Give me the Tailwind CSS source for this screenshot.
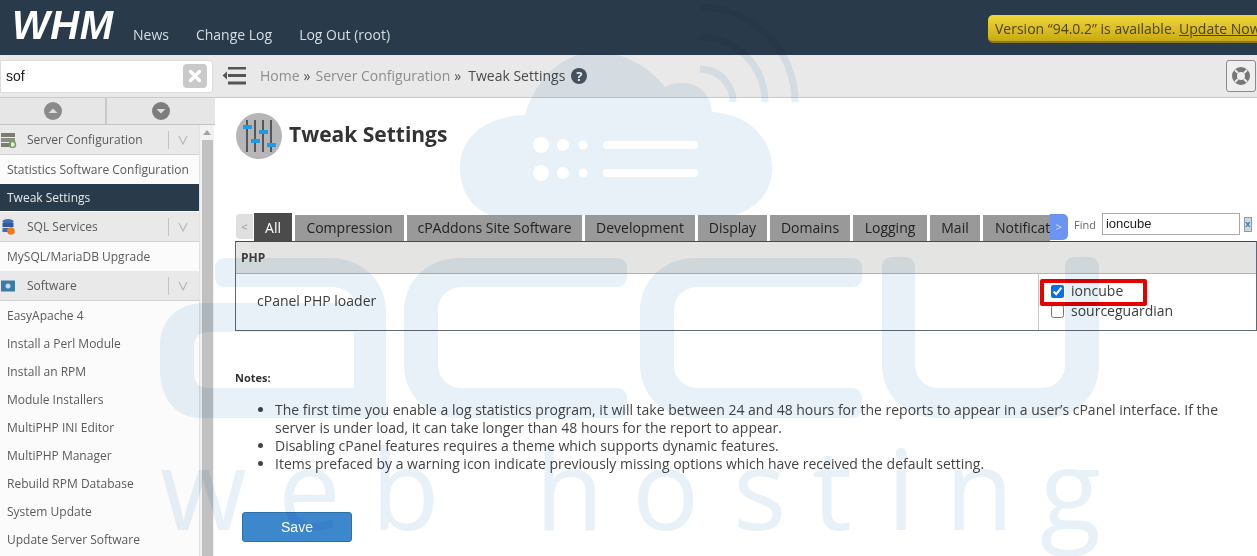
<!DOCTYPE html>
<html lang="en">
<head>
  <title>WHM Tweak Settings</title>
  <meta charset="utf-8" />
  <script src="https://cdn.jsdelivr.net/npm/@tailwindcss/browser@4"></script>
</head>
<body class="relative w-[1257px] h-[556px] overflow-hidden bg-white font-['Open_Sans',sans-serif] text-[14px] text-[#3d3d3d]">

<!-- top bar -->
<header class="h-[55px] bg-[#293a4b] flex items-start">
  <div class="w-[133px] pl-[12px] pt-[3px] text-white font-['Liberation_Sans',sans-serif] font-bold italic text-[40px] leading-[44px] tracking-[0.5px]">WHM</div>
  <nav class="flex gap-[27px] pt-[25px] text-[14px] leading-[19px] text-[#d5dde3]">
    <a>News</a>
    <a>Change Log</a>
    <a>Log Out (root)</a>
  </nav>
  <div class="ml-auto mt-[15px] w-[269px] h-[28px] rounded-l-[5px] pl-[7px] leading-[27px] whitespace-nowrap overflow-hidden text-[#4d4312] bg-gradient-to-b from-[#f0d838] to-[#c9a90f] border-b-2 border-[#8c7a18]">
    Version “94.0.2” is available. <span class="underline">Update Now</span>
  </div>
</header>

<!-- search + breadcrumb -->
<div class="h-[43px] flex items-center bg-[#e9e9e9] border-b border-[#c9c9c9]">
  <div class="w-[214px] h-[33px] relative">
    <div class="w-[213px] h-[33px] bg-white rounded-r-[3px] border border-[#dcdcdc] pl-[5px] font-['Liberation_Sans',sans-serif] text-[14px] leading-[31px] text-[#222]">sof</div>
    <div class="absolute left-[183px] top-[4px] w-[24px] h-[24px] rounded-[4px] bg-[#c9c9c9] flex items-center justify-center">
      <svg width="14" height="14" viewBox="0 0 14 14"><path d="M2.5 2.5L11.5 11.5M11.5 2.5L2.5 11.5" stroke="#fff" stroke-width="3.4" stroke-linecap="round"/></svg>
    </div>
  </div>
  <svg class="ml-[8px]" width="25" height="18" viewBox="0 0 25 18">
    <path d="M6 1H24M6 8.5H24M6 16H24" stroke="#555" stroke-width="3"/>
    <path d="M0.500 8.500L5 4.500V12.500Z" fill="#555"/>
  </svg>
  <div class="ml-[13px] flex items-center text-[14px] whitespace-nowrap">
    <span class="text-[#8d8d8d] mt-[-2px]">Home</span><span class="ml-[4px] text-[#555] mt-[-2px]">»</span>
    <span class="ml-[5px] text-[#8d8d8d] mt-[-2px]">Server Configuration</span><span class="ml-[4px] text-[#555] mt-[-2px]">»</span>
    <span class="ml-[7px] text-[#4a4a4a] mt-[-2px]">Tweak Settings</span>
    <span class="ml-[6px] w-[16px] h-[16px] rounded-full bg-[#4e5660] text-white text-[13px] font-bold leading-[16px] text-center">?</span>
  </div>
  <div class="ml-auto mr-[1px] w-[30px] h-[32px] rounded-[3px] border border-[#8a8a8a] bg-[#efefef] flex items-center justify-center">
    <svg width="20" height="20" viewBox="0 0 20 20">
      <circle cx="10" cy="10" r="6.500" fill="none" stroke="#777" stroke-width="5"/>
      <path d="M4 4L7 7M16 4L13 7M4 16L7 13M16 16L13 13" stroke="#efefef" stroke-width="1.800"/>
    </svg>
  </div>
</div>

<div class="flex h-[458px]">
  <!-- sidebar -->
  <aside class="w-[215px] shrink-0 flex flex-col">
    <div class="h-[27px] flex bg-[#e6e6e6] border-b border-[#c4c4c4]">
      <div class="w-[107px] border-r-2 border-[#c9c9c9] flex items-center justify-center">
        <svg width="18" height="18" viewBox="0 0 18 18"><circle cx="9" cy="9" r="9" fill="#8a8a8a"/><path d="M4.500 11L9 6.500L13.500 11Z" fill="#ddd"/></svg>
      </div>
      <div class="w-[108px] flex items-center justify-center">
        <svg width="18" height="18" viewBox="0 0 18 18"><circle cx="9" cy="9" r="9" fill="#7d7d7d"/><path d="M4.500 7L9 11.500L13.500 7Z" fill="#ddd"/></svg>
      </div>
    </div>
    <div class="flex flex-1 min-h-0">
      <div class="w-[200px] border-r border-[#e2e2e2] bg-[#fbfbfb] text-[12px] text-[#5a5a5a]">
        <div class="h-[30px] bg-[#e9e9e9] border-b border-[#d2d2d2] flex items-center text-[#595959]">
          <svg class="w-[27px] shrink-0" width="27" height="16" viewBox="0 0 27 16">
            <rect x="1" y="1" width="14" height="4" fill="#7d7d70"/><rect x="1" y="6" width="14" height="4" fill="#8d8d80"/><rect x="1" y="11" width="10" height="4" fill="#7d7d70"/>
            <circle cx="12.500" cy="12.500" r="3" fill="none" stroke="#6aa84f" stroke-width="1.500"/>
          </svg>
          <span class="flex-1">Server Configuration</span>
          <span class="w-[1px] h-[18px] bg-[#c4c4c4]"></span>
          <svg class="ml-[9px] mr-[11px]" width="10" height="10" viewBox="0 0 10 10"><path d="M1 1L5 9L9 1" fill="none" stroke="#b8b8b8" stroke-width="1.200"/></svg>
        </div>
        <div class="h-[29px] pl-[7px] leading-[29px] whitespace-nowrap">Statistics Software Configuration</div>
        <div class="h-[27px] pl-[7px] leading-[27px] bg-[#293a4b] text-[#e6ebef]">Tweak Settings</div>
        <div class="h-[31px] bg-[#e9e9e9] border-t border-white border-b-[#d2d2d2] border-b flex items-center text-[#595959]">
          <svg class="w-[27px] shrink-0" width="27" height="18" viewBox="0 0 27 18">
            <ellipse cx="8" cy="3.500" rx="5.500" ry="2.500" fill="#3f6fb5"/><rect x="2.500" y="5" width="11" height="4" fill="#2f5aa0"/><rect x="2.500" y="10" width="11" height="4" fill="#3f6fb5"/>
            <circle cx="11" cy="13" r="3.800" fill="#ee7b22"/>
          </svg>
          <span class="flex-1">SQL Services</span>
          <span class="w-[1px] h-[18px] bg-[#c4c4c4]"></span>
          <svg class="ml-[9px] mr-[11px]" width="10" height="10" viewBox="0 0 10 10"><path d="M1 1L5 9L9 1" fill="none" stroke="#b8b8b8" stroke-width="1.200"/></svg>
        </div>
        <div class="h-[29px] pl-[7px] leading-[29px]">MySQL/MariaDB Upgrade</div>
        <div class="h-[30px] bg-[#e9e9e9] border-b border-[#d2d2d2] flex items-center text-[#595959]">
          <svg class="w-[27px] shrink-0" width="27" height="12" viewBox="0 0 27 12">
            <rect x="1" y="0.500" width="14" height="11" fill="#3a7ca5"/><circle cx="8" cy="6" r="2.500" fill="#c9dbe6"/>
          </svg>
          <span class="flex-1">Software</span>
          <span class="w-[1px] h-[18px] bg-[#c4c4c4]"></span>
          <svg class="ml-[9px] mr-[11px]" width="10" height="10" viewBox="0 0 10 10"><path d="M1 1L5 9L9 1" fill="none" stroke="#b8b8b8" stroke-width="1.200"/></svg>
        </div>
        <ul class="pt-[1px]">
          <li class="h-[28px] pl-[7px] leading-[28px]">EasyApache 4</li>
          <li class="h-[28px] pl-[7px] leading-[28px]">Install a Perl Module</li>
          <li class="h-[28px] pl-[7px] leading-[28px]">Install an RPM</li>
          <li class="h-[28px] pl-[7px] leading-[28px]">Module Installers</li>
          <li class="h-[28px] pl-[7px] leading-[28px]">MultiPHP INI Editor</li>
          <li class="h-[28px] pl-[7px] leading-[28px]">MultiPHP Manager</li>
          <li class="h-[28px] pl-[7px] leading-[28px]">Rebuild RPM Database</li>
          <li class="h-[28px] pl-[7px] leading-[28px]">System Update</li>
          <li class="h-[28px] pl-[7px] leading-[28px]">Update Server Software</li>
        </ul>
      </div>
      <div class="w-[14px] bg-[#f1f1f1] flex flex-col items-center">
        <svg class="mt-[5px]" width="8" height="5" viewBox="0 0 8 5"><path d="M0 5L4 0L8 5Z" fill="#a3a3a3"/></svg>
        <div class="mt-[5px] w-[11px] flex-1 bg-[#c1c1c1]"></div>
      </div>
    </div>
  </aside>

  <!-- content -->
  <main class="flex-1 min-w-0 pt-[15px] relative">
    <div class="flex h-[46px] ml-[21px]">
      <svg width="46" height="46" viewBox="0 0 46 46">
        <circle cx="23" cy="23" r="23" fill="#b6b6b6"/>
        <path d="M11 7V39M19 7V39M27 7V39M35 7V39" stroke="#55565a" stroke-width="2"/>
        <rect x="7" y="12" width="9" height="4" fill="#1d9be6"/><rect x="15" y="26" width="9" height="4" fill="#1d9be6"/>
        <rect x="23" y="17" width="9" height="4" fill="#1d9be6"/><rect x="31" y="30" width="9" height="4" fill="#1d9be6"/>
      </svg>
      <h1 class="ml-[7px] text-[21px] font-bold leading-[42px] text-[#333]">Tweak Settings</h1>
    </div>

    <!-- tabs -->
    <div class="mt-[54px] ml-[21px] flex items-end h-[28px]">
      <div class="w-[17px] h-[25px] mb-[2px] bg-[#dfdfdf] rounded-l-[4px] text-[#999] text-[11px] leading-[25px] text-center">&lt;</div>
      <div class="w-[796px] ml-[1px] overflow-hidden flex items-end gap-[3px] whitespace-nowrap text-[#222]">
        <span class="shrink-0 h-[28px] w-[38px] text-center leading-[30px] bg-[#4b4b4b] text-white">All</span>
        <span class="shrink-0 h-[26px] w-[109px] text-center leading-[26px] bg-[#999]">Compression</span>
        <span class="shrink-0 h-[26px] w-[175px] text-center leading-[26px] bg-[#999]">cPAddons Site Software</span>
        <span class="shrink-0 h-[26px] w-[110px] text-center leading-[26px] bg-[#999]">Development</span>
        <span class="shrink-0 h-[26px] w-[69px] text-center leading-[26px] bg-[#999]">Display</span>
        <span class="shrink-0 h-[26px] w-[80px] text-center leading-[26px] bg-[#999]">Domains</span>
        <span class="shrink-0 h-[26px] w-[74px] text-center leading-[26px] bg-[#999]">Logging</span>
        <span class="shrink-0 h-[26px] w-[50px] text-center leading-[26px] bg-[#999]">Mail</span>
        <span class="shrink-0 h-[26px] pl-[12px] w-[100px] leading-[26px] bg-[#999]">Notifications</span>
      </div>
      <div class="w-[18px] h-[26px] mb-[1px] bg-[#6c94f2] rounded-r-[5px] text-[#dbe5fb] text-[11px] leading-[26px] text-center">&gt;</div>
      <span class="ml-[6px] mb-[8px] text-[11px] text-[#666]">Find</span>
      <div class="ml-[6px] mb-[6px] w-[138px] h-[22px] border border-[#aaa] bg-white pl-[3px] font-['Liberation_Sans',sans-serif] text-[13px] leading-[20px] text-[#222]">ioncube</div>
      <div class="ml-[4px] mb-[9px] w-[8px] h-[15px] bg-[#cfd6dc] border border-[#999] text-[#2a86c8] text-[9px] leading-[12px] text-center font-bold">x</div>
    </div>

    <!-- settings table -->
    <div class="ml-[20px] border border-[#5f6a75] border-t-[#3f4a55] h-[90px] flex flex-col">
      <div class="h-[32px] bg-[#e4e4e2] border-b border-[#b4b4b4] pl-[5px] text-[12px] font-bold leading-[31px]">PHP</div>
      <div class="flex-1 flex">
        <div class="flex-1 pl-[21px] leading-[53px]">cPanel PHP loader</div>
        <div class="w-[218px] border-l border-[#c8c8c8] pl-[12px] pt-[7px] leading-[20px]">
          <label class="flex items-center h-[20px] gap-[7px]"><input type="checkbox" checked class="m-0 accent-[#0b6ee8]" /> ioncube</label>
          <label class="flex items-center h-[20px] gap-[7px]"><input type="checkbox" class="m-0" /> sourceguardian</label>
        </div>
      </div>
    </div>

    <section class="ml-[20px] mt-[39px]">
      <div class="text-[11px] font-bold leading-[15px] text-[#333]">Notes:</div>
      <ul class="mt-[16px] pl-[40px] pr-[30px] list-disc leading-[18px] text-[14px] text-[#444]">
        <li>The first time you enable a log statistics program, it will take between 24 and 48 hours for the reports to appear in a user’s cPanel interface. If the server is under load, it can take longer than 48 hours for the report to appear.</li>
        <li>Disabling cPanel features requires a theme which supports dynamic features.</li>
        <li>Items prefaced by a warning icon indicate previously missing options which have received the default setting.</li>
      </ul>
      <button class="mt-[39px] ml-[7px] w-[110px] h-[30px] bg-[#3d87cd] border border-[#2f70ab] rounded-[3px] text-white font-['Liberation_Sans',sans-serif] text-[14px]">Save</button>
    </section>
  </main>
</div>

<!-- annotation box round the ioncube option -->
<div class="absolute left-[1040px] top-[279px] w-[107px] h-[27px] border-[4px] border-[#e60000] rounded-[2px] pointer-events-none"></div>

<!-- watermark over the whole page -->
<svg class="absolute inset-0 pointer-events-none mix-blend-multiply" width="1257" height="556" viewBox="0 0 1257 556">
  <g fill="#e8f1f8">
    <path d="M525 115C535 80 562 52 597 52C625 52 650 68 665 87C672 83 678 83 684 83C700 83 711 96 712 112C748 114 772 138 772 168C772 192 757 208 735 215H490C472 208 460 192 460 168C460 138 484 116 525 115Z"/>
    <path fill-rule="evenodd" d="M225 258H330C362 258 386 280 386 312V418H200C176 418 160 398 160 370V345C160 320 178 303 204 303H354C354 294 345 287 330 287H225C219 287 215 283 215 277V268C215 262 219 258 225 258ZM354 332H208C200 332 194 338 194 346V374C194 382 200 388 208 388H354Z"/>
    <path d="M460 258H617C623 258 627 262 627 268V277C627 283 623 287 617 287H462C448 287 438 297 438 311V364C438 378 448 388 462 388H617C623 388 627 392 627 398V408C627 414 623 418 617 418H460C428 418 404 396 404 364V312C404 280 428 258 460 258Z"/>
    <path d="M696 258H852C858 258 862 262 862 268V277C862 283 858 287 852 287H698C684 287 674 297 674 311V364C674 378 684 388 698 388H852C858 388 862 392 862 398V408C862 414 858 418 852 418H696C664 418 640 396 640 364V312C640 280 664 258 696 258Z"/>
    <path d="M892 257H905C911 257 915 261 915 267V364C915 378 925 388 939 388H1041C1055 388 1065 378 1065 364V267C1065 261 1069 257 1075 257H1089C1095 257 1099 261 1099 267V364C1099 396 1076 418 1044 418H938C906 418 882 396 882 364V267C882 261 886 257 892 257Z"/>
    <text y="530" x="160 278 371 535 632 733 812 887 945 1040" font-size="112" font-family="Open Sans, sans-serif">webhosting</text>
  </g>
  <g fill="none" stroke="#e8f1f8" stroke-width="7">
    <path d="M700 69A33 33 0 0 1 733 102"/>
    <path d="M700 37A65 65 0 0 1 765 102"/>
    <path d="M700 7A95 95 0 0 1 795 102"/>
  </g>
  <g fill="#fff">
    <circle cx="541" cy="145" r="8"/><circle cx="563" cy="145" r="6"/><circle cx="583" cy="145" r="4.500"/>
    <rect x="603" y="141" width="95" height="8" rx="4"/>
    <circle cx="541" cy="173" r="8"/><circle cx="563" cy="173" r="6"/><circle cx="583" cy="173" r="4.500"/>
    <rect x="603" y="169" width="95" height="8" rx="4"/>
  </g>
</svg>
</body>
</html>
